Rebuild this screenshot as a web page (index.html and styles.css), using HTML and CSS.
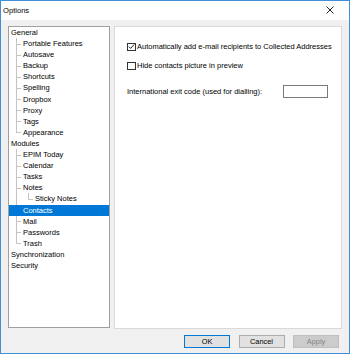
FILE: index.html
```html
<!DOCTYPE html>
<html>
<head>
<meta charset="utf-8">
<link rel="stylesheet" href="styles.css">
</head>
<body>
<div class="window">
  <div class="titlebar">
    <span class="title">Options</span>
    <svg class="close" width="8" height="8" viewBox="0 0 8 8"><path d="M0.5 0.5L7.5 7.5M7.5 0.5L0.5 7.5" stroke="#222" stroke-width="1" fill="none"/></svg>
  </div>
  <div class="main">
    <div class="panels">
      <div class="tree">
        <ul class="level0">
          <li><div class="row">General</div>
            <ul class="sub">
              <li><div class="row">Portable Features</div></li>
              <li><div class="row">Autosave</div></li>
              <li><div class="row">Backup</div></li>
              <li><div class="row">Shortcuts</div></li>
              <li><div class="row">Spelling</div></li>
              <li><div class="row">Dropbox</div></li>
              <li><div class="row">Proxy</div></li>
              <li><div class="row">Tags</div></li>
              <li><div class="row">Appearance</div></li>
            </ul>
          </li>
          <li><div class="row">Modules</div>
            <ul class="sub">
              <li><div class="row">EPIM Today</div></li>
              <li><div class="row">Calendar</div></li>
              <li><div class="row">Tasks</div></li>
              <li><div class="row">Notes</div>
                <ul class="sub sub2">
                  <li><div class="row">Sticky Notes</div></li>
                </ul>
              </li>
              <li><div class="row selected">Contacts</div></li>
              <li><div class="row">Mail</div></li>
              <li><div class="row">Passwords</div></li>
              <li><div class="row">Trash</div></li>
            </ul>
          </li>
          <li><div class="row">Synchronization</div></li>
          <li><div class="row">Security</div></li>
        </ul>
      </div>
      <div class="settings">
        <label class="check-row first">
          <span class="checkbox checked">
            <svg width="7" height="7" viewBox="0 0 7 7"><path d="M0.8 3.6L2.6 5.4L6.2 1.4" stroke="#222" stroke-width="1" fill="none"/></svg>
          </span>
          <span class="label">Automatically add e-mail recipients to Collected Addresses</span>
        </label>
        <label class="check-row second">
          <span class="checkbox"></span>
          <span class="label">Hide contacts picture in preview</span>
        </label>
        <div class="field-row">
          <span class="label">International exit code (used for dialling):</span>
          <span class="input"></span>
        </div>
      </div>
    </div>
    <div class="buttons">
      <div class="btn default">OK</div>
      <div class="btn">Cancel</div>
      <div class="btn disabled">Apply</div>
    </div>
  </div>
</div>
</body>
</html>
```
FILE: styles.css
```css
* { box-sizing: border-box; }
html, body { margin: 0; padding: 0; }
body {
  width: 350px;
  height: 354px;
  font-family: "Liberation Sans", Arial, sans-serif;
  font-size: 7.5px;
  color: #000;
  background: #fff;
}
.window {
  width: 350px;
  height: 354px;
  border: 1px solid #3f8fd9;
  display: flex;
  flex-direction: column;
  background: #f0f0f0;
}
.titlebar {
  height: 19px;
  background: #fff;
  display: flex;
  align-items: center;
  justify-content: space-between;
  padding: 0 15px 1px 2px;
}
.title { font-size: 7.6px; }
.close { display: block; }
.main {
  flex: 1;
  display: flex;
  flex-direction: column;
  padding: 6px 6px 0 7px;
}
.panels {
  display: flex;
  gap: 4px;
  height: 303px;
}
.tree {
  width: 102px;
  height: 302px;
  background: #fff;
  border: 1px solid #a0a0a0;
  padding-top: 0;
}
.tree ul { list-style: none; margin: 0; padding: 0; }
.row {
  height: 11.1px;
  line-height: 11.1px;
  padding-left: 2px;
  white-space: nowrap;
}
.sub > li > .row { padding-left: 14px; }
.sub2 > li > .row { padding-left: 26px; }
.row.selected { background: #0078d7; color: #fff; }
.sub > li { position: relative; }
.sub > li::before {
  content: "";
  position: absolute;
  left: 7px;
  top: 0;
  bottom: 0;
  border-left: 1px solid #c4c4c4;
}
.sub > li:last-child::before { bottom: auto; height: 6px; }
.sub > li::after {
  content: "";
  position: absolute;
  left: 7px;
  top: 5.5px;
  width: 5px;
  border-top: 1px solid #c4c4c4;
}
.sub > li > .row.selected { position: relative; z-index: 1; }
.sub2 > li::before { left: 19px; }
.sub2 > li::after { left: 19px; }
.settings {
  width: 228px;
  height: 303px;
  background: #fff;
  border: 1px solid #d9d9d9;
  padding: 15px 0 0 12px;
  display: flex;
  flex-direction: column;
}
.check-row {
  display: flex;
  align-items: center;
  height: 9px;
}
.check-row.second { margin-top: 10px; }
.checkbox {
  width: 9px;
  height: 8px;
  border: 1px solid #333;
  background: #fff;
  margin-right: 1px;
  display: flex;
  align-items: center;
  justify-content: center;
}
.checkbox svg { display: block; }
.field-row {
  display: flex;
  align-items: center;
  margin-top: 15px;
  height: 13px;
}
.field-row .label { width: 156px; }
.input {
  width: 45px;
  height: 13px;
  border: 1px solid #7a7a7a;
  background: #fff;
}
.buttons {
  display: flex;
  justify-content: flex-end;
  gap: 8.5px;
  padding-top: 6px;
  padding-right: 4px;
}
.btn {
  width: 46px;
  height: 13px;
  border: 1px solid #adadad;
  background: #e1e1e1;
  display: flex;
  align-items: center;
  justify-content: center;
  font-size: 7.4px;
}
.btn.default { border-color: #0078d7; }
.btn.disabled { background: #cccccc; border-color: #bfbfbf; color: #838383; }
```
